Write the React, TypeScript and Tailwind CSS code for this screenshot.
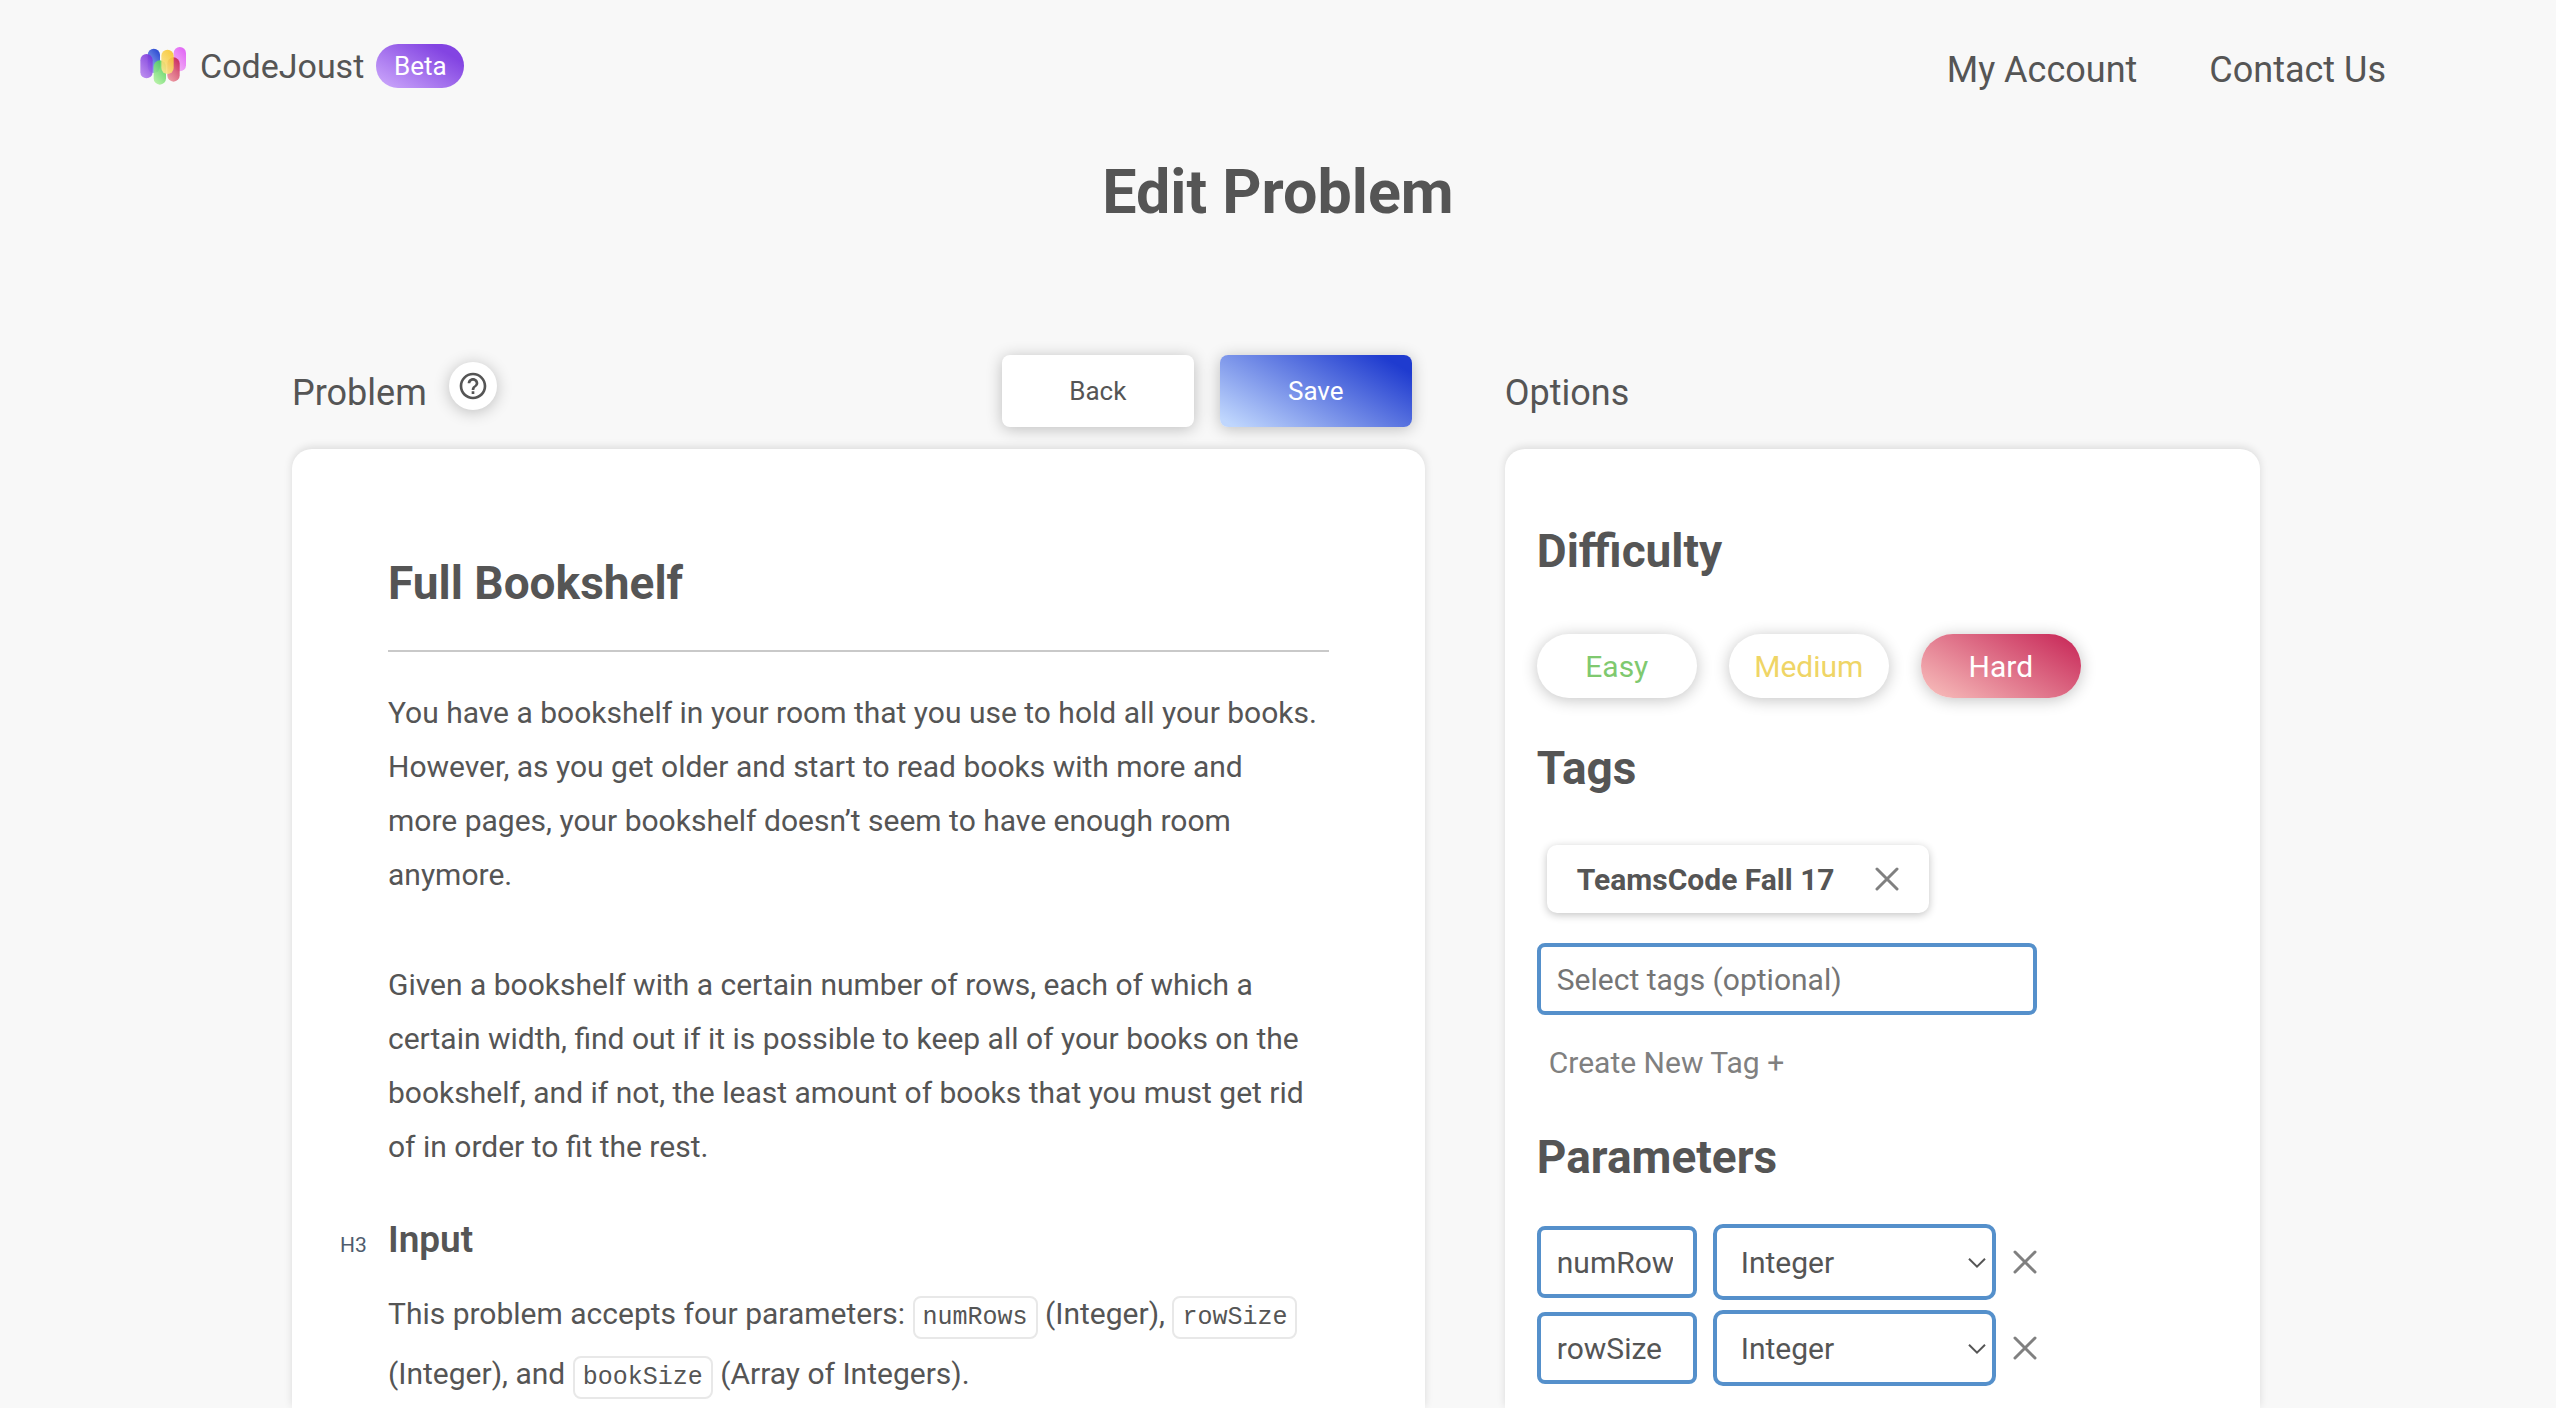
import React, { useState } from "react";

function Logo() {
  const bars = [
    { x: 101, y: 0, from: "#f4b8f4", to: "#e05cf5" },
    { x: 23, y: 5, from: "#a8c0f5", to: "#1d3fd0" },
    { x: 82, y: 31, from: "#f0a0a4", to: "#c92a57" },
    { x: 41, y: 40, from: "#bdf5a8", to: "#52cf5c" },
    { x: 64, y: 8, from: "#fbe9a0", to: "#f8c832" },
    { x: 1, y: 21, from: "#bd8cf0", to: "#7c38dc" },
  ];
  return (
    <svg viewBox="0 0 138 114" className="h-[38px] w-[46px]" aria-hidden="true">
      <defs>
        {bars.map((b, i) => (
          <linearGradient key={i} id={`bar${i}`} x1="0" y1="1" x2="0.6" y2="0">
            <stop offset="0" stopColor={b.from} />
            <stop offset="1" stopColor={b.to} />
          </linearGradient>
        ))}
      </defs>
      {bars.map((b, i) => (
        <rect key={i} x={b.x} y={b.y} width="37" height="73" rx="18.5" fill={`url(#bar${i})`} fillOpacity="0.9" />
      ))}
    </svg>
  );
}

function CloseIcon() {
  return (
    <svg viewBox="0 0 24 24" className="size-6" fill="none" stroke="#808080" strokeWidth="3" strokeLinecap="round" aria-hidden="true">
      <path d="M2 2L22 22M22 2L2 22" />
    </svg>
  );
}

function Heading({ children, className }: { children: React.ReactNode; className: string }) {
  return <h2 className={`text-[46px] font-bold leading-[56px] ${className}`}>{children}</h2>;
}

function Code({ children }: { children: string }) {
  return (
    <code className="rounded-lg border-2 border-[#e8e8e8] bg-white px-2 py-[5px] font-['Liberation_Mono',monospace] text-[25px] leading-none">
      {children}
    </code>
  );
}

const levels = [
  { name: "Easy", idle: "text-[#7fc96f]", active: "bg-[linear-gradient(30deg,#bdf5a8,#52cf5c)] text-white" },
  { name: "Medium", idle: "text-[#efd566]", active: "bg-[linear-gradient(30deg,#fbe9a0,#f8c832)] text-white" },
  { name: "Hard", idle: "text-[#c92a57]", active: "bg-[linear-gradient(30deg,#f9c2be,#c62355)] text-white" },
];

const fieldBorder = "border-4 border-[#5590cb] bg-white outline-none";

function ParameterRow({ name }: { name: string }) {
  return (
    <div className="flex items-center">
      <input
        aria-label="Parameter name"
        defaultValue={name}
        className={`h-[72px] w-40 rounded-lg pl-4 pr-5 ${fieldBorder}`}
      />
      <div className="relative ml-4">
        <select
          aria-label="Parameter type"
          defaultValue="Integer"
          className={`h-[76px] w-[283px] appearance-none rounded-[10px] pl-6 pr-12 ${fieldBorder}`}
        >
          <option>Integer</option>
          <option>String</option>
          <option>Array of Integers</option>
        </select>
        <svg
          viewBox="0 0 18 10"
          className="pointer-events-none absolute right-[10px] top-[34px] h-[10px] w-[18px]"
          fill="none"
          stroke="#555555"
          strokeWidth="2"
          aria-hidden="true"
        >
          <path d="M1 0.8L9 8.6L17 0.8" />
        </svg>
      </div>
      <button aria-label={`Remove ${name}`} className="ml-4 p-px">
        <CloseIcon />
      </button>
    </div>
  );
}

export default function App() {
  const [level, setLevel] = useState("Hard");
  return (
    <div className="flex h-screen flex-col overflow-hidden bg-[#f8f8f8] font-['Roboto',sans-serif] text-[30px] text-[#555555]">
      <header className="flex items-start justify-between pl-[140px] pr-[170px] pt-11">
        <a href="#home" className="flex h-11 items-center">
          <Logo />
          <span className="ml-[14px] text-[34px] leading-[44px]">CodeJoust</span>
          <span className="ml-3 flex h-11 w-[88px] items-center justify-center rounded-full bg-[linear-gradient(30deg,#cfacfc,#8344e2_80%)] text-[26px] text-white">
            Beta
          </span>
        </a>
        <nav className="flex gap-[72px] pt-1 text-[36px] leading-[44px]">
          <a href="#account">My Account</a>
          <a href="#contact">Contact Us</a>
        </nav>
      </header>

      <h1 className="mt-[64px] text-center text-[61px] font-bold leading-[72px]">Edit Problem</h1>

      <main className="grid flex-1 grid-cols-[3fr_2fr] gap-20 pl-[292px] pr-[296px] pt-[127px]">
        <section className="flex flex-col">
          <div className="mb-[22px] flex h-[72px] items-center pr-[13px]">
            <h2 className="pt-1 text-[36px] leading-[44px]">Problem</h2>
            <button
              aria-label="Help"
              className="mb-[10px] ml-[22px] flex size-12 items-center justify-center rounded-full bg-white shadow-[0_2px_16px_rgba(0,0,0,0.24)]"
            >
              <svg viewBox="0 0 24 24" className="size-8" fill="#555555" aria-hidden="true">
                <path d="M11 18h2v-2h-2v2zm1-16C6.48 2 2 6.48 2 12s4.48 10 10 10 10-4.480 10-10S17.520 2 12 2zm0 18c-4.410 0-8-3.590-8-8s3.590-8 8-8 8 3.590 8 8-3.590 8-8 8zm0-14c-2.210 0-4 1.790-4 4h2c0-1.100.9-2 2-2s2 .9 2 2c0 2-3 1.750-3 5h2c0-2.250 3-2.500 3-5 0-2.210-1.790-4-4-4z" />
              </svg>
            </button>
            <div className="ml-auto flex gap-[26px] text-[26px]">
              <button className="h-[72px] w-48 rounded-lg bg-white shadow-[0_2px_16px_rgba(0,0,0,0.24)]">Back</button>
              <button className="h-[72px] w-48 rounded-lg bg-[linear-gradient(30deg,#bfd6fd_5%,#1f3bcf_90%)] text-white shadow-[0_2px_16px_rgba(0,0,0,0.24)]">
                Save
              </button>
            </div>
          </div>

          <article className="flex-1 rounded-t-[20px] bg-white px-24 pt-[106px] shadow-[0_-2px_8px_rgba(0,0,0,0.12)]">
            <Heading className="">Full Bookshelf</Heading>
            <hr className="mt-[39px] border-t-2 border-[#c9c9c9]" />
            <div className="mt-[34px] flex flex-col gap-14 leading-[54px]">
              <p>
                You have a bookshelf in your room that you use to hold all your books. However, as you get older and
                start to read books with more and more&nbsp;pages, your bookshelf doesn’t seem to have enough room
                anymore.
              </p>
              <p>
                Given a bookshelf with a certain number of rows, each of which a certain width, find out if it is
                possible to keep all of your books on the bookshelf, and if not, the least amount of books that you must
                get rid of in order to fit the rest.
              </p>
            </div>
            <div className="-ml-12 mt-[42px] flex items-baseline">
              <span className="w-12 text-[21px] text-[#4e5c6e]">H3</span>
              <h3 className="text-[37px] font-semibold leading-[48px]">Input</h3>
            </div>
            <p className="mt-5 leading-[60px]">
              This problem accepts four parameters: <Code>numRows</Code> (Integer), <Code>rowSize</Code> (Integer), and{" "}
              <Code>bookSize</Code> (Array of Integers).
            </p>
          </article>
        </section>

        <section className="flex flex-col">
          <div className="mb-[22px] flex h-[72px] items-center">
            <h2 className="pt-1 text-[36px] leading-[44px]">Options</h2>
          </div>
          <div className="flex-1 rounded-t-[20px] bg-white px-8 pt-[74px] shadow-[0_-2px_8px_rgba(0,0,0,0.12)]">
            <Heading className="">Difficulty</Heading>
            <div className="mt-[55px] flex gap-8">
              {levels.map((l) => (
                <button
                  key={l.name}
                  aria-pressed={level === l.name}
                  onClick={() => setLevel(l.name)}
                  className={`h-16 w-40 rounded-full shadow-[0_2px_16px_rgba(0,0,0,0.24)] ${level === l.name ? l.active : `bg-white ${l.idle}`}`}
                >
                  {l.name}
                </button>
              ))}
            </div>

            <Heading className="mt-[42px]">Tags</Heading>
            <div className="ml-[10px] mt-[49px] flex h-[68px] w-fit items-center rounded-[10px] bg-white px-[30px] shadow-[0_2px_8px_rgba(0,0,0,0.24)]">
              <span className="font-bold">TeamsCode Fall 17</span>
              <button aria-label="Remove TeamsCode Fall 17" className="ml-10">
                <CloseIcon />
              </button>
            </div>
            <input
              aria-label="Select tags"
              placeholder="Select tags (optional)"
              className={`mt-[30px] block h-[72px] w-[500px] rounded-lg px-4 placeholder:text-[#757575] ${fieldBorder}`}
            />
            <button className="ml-3 mt-7 block leading-[40px] text-[#808080]">Create New Tag +</button>

            <Heading className="mt-[46px]">Parameters</Heading>
            <div className="mt-[39px] flex flex-col gap-[10px]">
              <ParameterRow name="numRows" />
              <ParameterRow name="rowSize" />
            </div>
          </div>
        </section>
      </main>
    </div>
  );
}
